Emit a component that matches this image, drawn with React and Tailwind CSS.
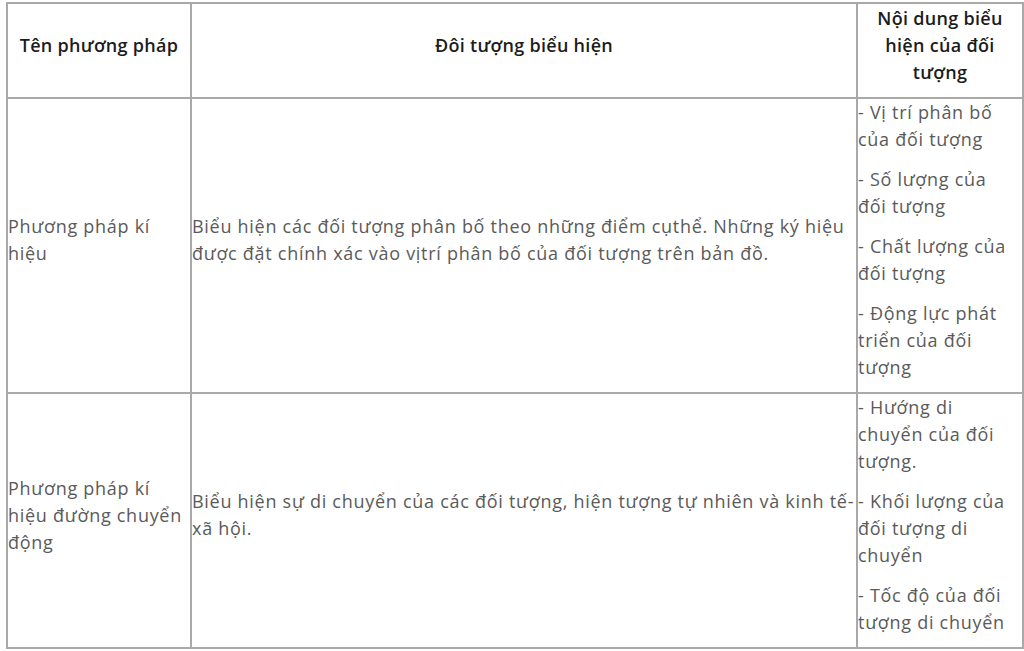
const ROWS = [
  {
    name: ['Phương pháp kí', 'hiệu'],
    target: [
      'Biểu hiện các đối tượng phân bố theo những điểm cụthể. Những ký hiệu',
      'được đặt chính xác vào vịtrí phân bố của đối tượng trên bản đồ.',
    ],
    content: [
      ['- Vị trí phân bố', 'của đối tượng'],
      ['- Số lượng của', 'đối tượng'],
      ['- Chất lượng của', 'đối tượng'],
      ['- Động lực phát', 'triển của đối', 'tượng'],
    ],
  },
  {
    name: ['Phương pháp kí', 'hiệu đường chuyển', 'động'],
    target: [
      'Biểu hiện sự di chuyển của các đối tượng, hiện tượng tự nhiên và kinh tế-',
      'xã hội.',
    ],
    content: [
      ['- Hướng di', 'chuyển của đối', 'tượng.'],
      ['- Khối lượng của', 'đối tượng di', 'chuyển'],
      ['- Tốc độ của đối', 'tượng di chuyển'],
    ],
  },
];

function Lines({ lines }) {
  return (
    <p className="mb-[13px] last:mb-[11px] whitespace-nowrap">
      {lines.map((l, i) => (
        <span key={i} className="block">{l}</span>
      ))}
    </p>
  );
}

export default function App() {
  return (
    <div className="bg-white w-[1024px] h-[651px] pt-[2px] pl-[6px] font-['Open_Sans',sans-serif] text-[18px] leading-[27px] tracking-[0.72px] overflow-hidden">
      <table className="border-collapse border-2 border-[#a9a9a9] w-[1016px] table-fixed">
        <colgroup>
          <col className="w-[184px]" />
          <col className="w-[666px]" />
          <col className="w-[166px]" />
        </colgroup>
        <thead>
          <tr className="h-[95px] text-[#1c1c1c] text-center">
            <th className="border-2 border-[#a9a9a9] p-0 align-middle font-semibold tracking-[0.3px]">
              <Lines lines={['Tên phương pháp']} />
            </th>
            <th className="border-2 border-[#a9a9a9] p-0 align-middle font-semibold tracking-[0.3px]">
              <Lines lines={['Đôi tượng biểu hiện']} />
            </th>
            <th className="border-2 border-[#a9a9a9] p-0 align-middle font-semibold tracking-[0.3px]">
              <Lines lines={['Nội dung biểu', 'hiện của đối', 'tượng']} />
            </th>
          </tr>
        </thead>
        <tbody className="text-[#5a5a5a]">
          {ROWS.map((row, i) => (
            <tr key={i}>
              <td className="border-2 border-[#a9a9a9] p-0 align-middle">
                <Lines lines={row.name} />
              </td>
              <td className="border-2 border-[#a9a9a9] p-0 align-middle">
                <Lines lines={row.target} />
              </td>
              <td className="border-2 border-[#a9a9a9] p-0 align-top">
                {row.content.map((c, j) => (
                  <Lines key={j} lines={c} />
                ))}
              </td>
            </tr>
          ))}
        </tbody>
      </table>
    </div>
  );
}
